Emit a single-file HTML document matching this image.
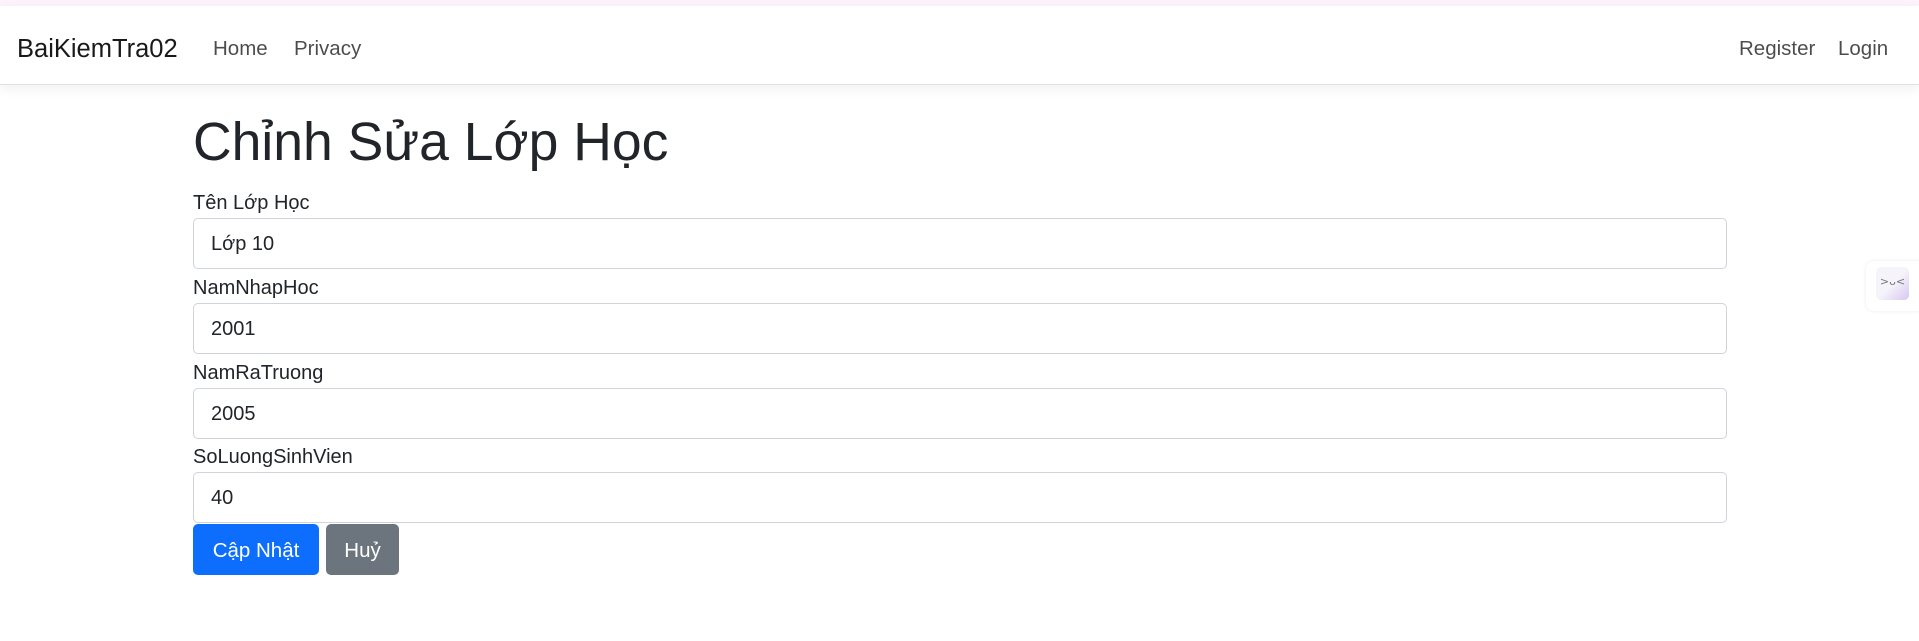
<!DOCTYPE html>
<html><head><meta charset="utf-8"><style>
*{box-sizing:border-box;margin:0;padding:0}
body{width:1919px;height:641px;overflow:hidden;background:#fff;font-family:"Segoe UI","Liberation Sans","Noto Sans CJK SC",sans-serif;color:#212529;position:relative}
.strip{position:absolute;left:0;top:0;width:1919px;height:6px;background:#fcf3fc}
.nav{position:absolute;left:0;top:6px;width:1919px;height:79px;background:#fff;border-bottom:1px solid #dee2e6;box-shadow:0 4px 12px rgba(0,0,0,.06)}
.t{position:absolute;white-space:nowrap;line-height:1}
.nav .t{top:33px;font-size:20.5px;color:rgba(0,0,0,.7)}
.nav .brand{font-size:25.5px;top:31px;color:rgba(0,0,0,.9)}
h1{position:absolute;left:193px;top:116px;font-size:53.5px;font-weight:500;line-height:1;white-space:nowrap}
.lbl{position:absolute;left:193px;font-size:20px;line-height:1}
.inp{position:absolute;left:193px;width:1534px;height:51px;border:1px solid #ced4da;border-radius:5px;font-size:20px;padding-left:17px;line-height:51px}
.btn{position:absolute;top:524px;height:51px;border-radius:5px;color:#fff;font-size:20.5px;line-height:53px;text-align:center}
.w{position:absolute;left:1866px;top:261px;width:60px;height:50px;background:#fff;border-radius:8px;box-shadow:0 0 4px rgba(0,0,0,.08)}
.wi{position:absolute;left:10px;top:6px;width:33px;height:33px;border-radius:5px;background:linear-gradient(135deg,#f5f4fa 50%,#d7c6f2);font-size:11px;color:#777;text-align:center;line-height:30px;font-family:"DejaVu Sans",sans-serif}
</style></head><body>
<div class="strip"></div>
<div class="nav">
<span class="t brand" style="left:17px">BaiKiemTra02</span>
<span class="t" style="left:213px">Home</span>
<span class="t" style="left:294px">Privacy</span>
<span class="t" style="left:1739px">Register</span>
<span class="t" style="left:1838px">Login</span>
</div>
<h1>Chỉnh Sửa Lớp Học</h1>
<div class="lbl" style="top:193px">Tên Lớp Học</div>
<div class="inp" style="top:218px">Lớp 10</div>
<div class="lbl" style="top:278px">NamNhapHoc</div>
<div class="inp" style="top:303px">2001</div>
<div class="lbl" style="top:363px">NamRaTruong</div>
<div class="inp" style="top:388px">2005</div>
<div class="lbl" style="top:447px">SoLuongSinhVien</div>
<div class="inp" style="top:472px">40</div>
<div class="btn" style="left:193px;width:126px;background:#0d6efd">Cập Nhật</div>
<div class="btn" style="left:326px;width:73px;background:#6c757d">Huỷ</div>
<div class="w"><div class="wi">&gt;ᴗ&lt;</div></div>
</body></html>
